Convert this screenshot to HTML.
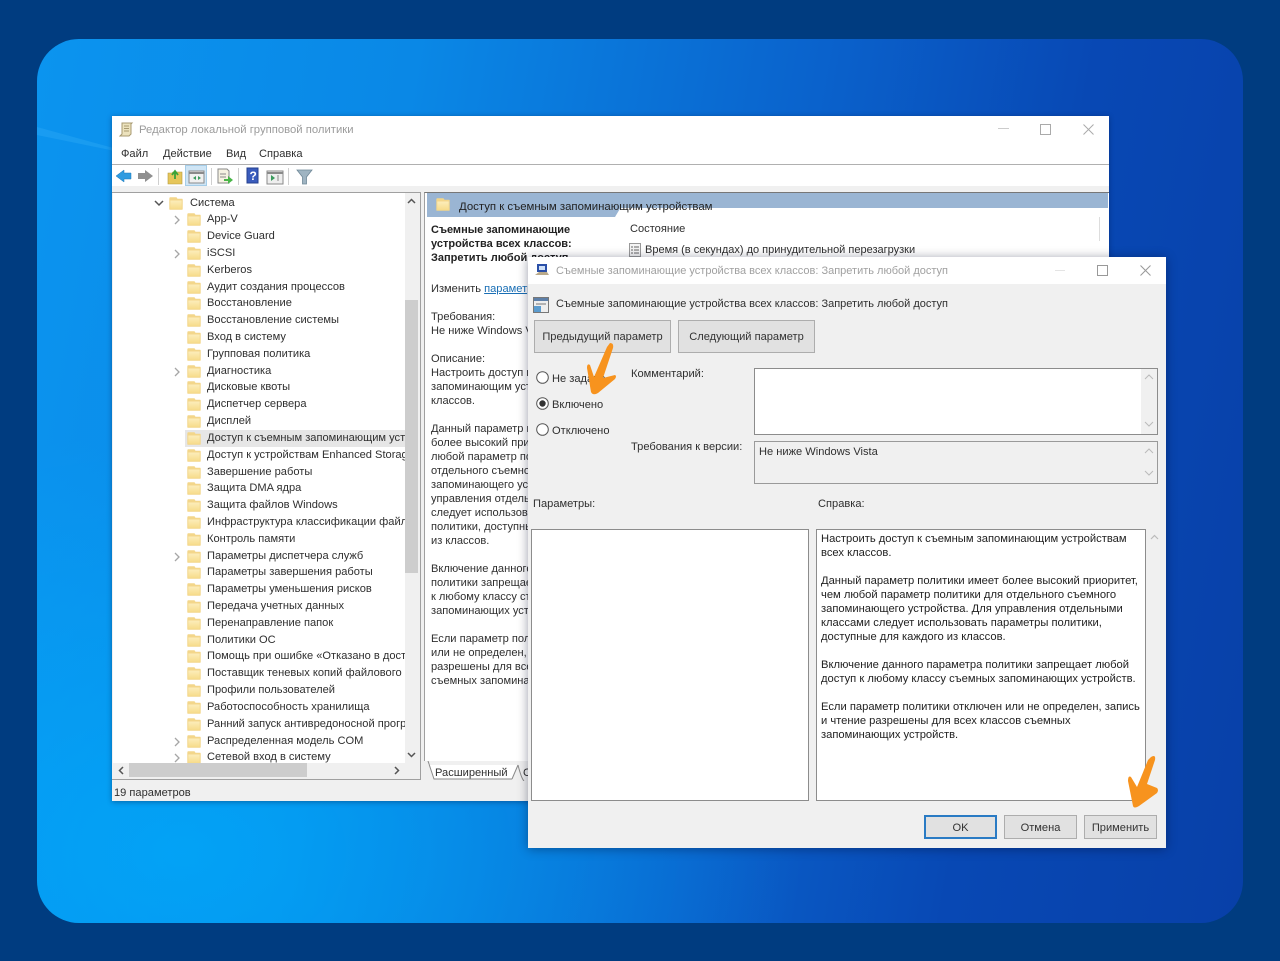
<!DOCTYPE html>
<html lang="ru"><head><meta charset="utf-8"><title>Редактор</title>
<style>
html,body{margin:0;padding:0}
body{width:1280px;height:961px;position:relative;overflow:hidden;background:#003c80;font-family:"Liberation Sans",sans-serif;font-size:11.1px;color:#2f2f2f}
.a{position:absolute;white-space:nowrap;line-height:14px}
.t{margin-top:1px}
.bg{position:absolute;left:37px;top:39px;width:1206px;height:884px;border-radius:42px;overflow:hidden;background:radial-gradient(620px 420px at 12% 92%,rgba(0,170,250,.75),rgba(0,170,250,0) 100%),linear-gradient(100deg,#0b94ef 0%,#0a88e6 28%,#0a62cc 58%,#0848b4 78%,#0840a8 100%)}
.win{position:absolute;background:#fff}
.tree{position:absolute;left:113px;top:193px;width:292px;height:570px;overflow:hidden;background:#fff;padding-top:1.500px;box-sizing:border-box}
.r{position:relative;height:16.8125px;line-height:16.8px;padding-left:94px;white-space:nowrap}
.r svg.f{position:absolute;left:74px;top:2px}
.r svg.c{position:absolute;left:60px;top:4px}
.sel{background:#e6e6e6}
.btn{position:absolute;background:#e1e1e1;border:1px solid #adadad;box-sizing:border-box;text-align:center;color:#333}
.tb{position:absolute;background:#fff;border:1px solid #8c8c8c;box-sizing:border-box}
</style></head><body>
<svg width="0" height="0" style="position:absolute"><defs>
<linearGradient id="fg" x1="0" y1="0" x2="0" y2="1"><stop offset="0" stop-color="#fcedbb"/><stop offset="1" stop-color="#f7dc8c"/></linearGradient>
<symbol id="fo" viewBox="0 0 14 13"><path d="M.3 2.500V12c0 .5.3.8.8.8h11.800c.5 0 .8-.3.8-.8V2.500c0-.5-.3-.8-.8-.8H8.500L7.500.3H1.100C.6.300.3.800.3 2.500z" fill="#f3d68a"/><path d="M1.300 3.500h11.400v8.300H1.300z" fill="url(#fg)"/></symbol>
<symbol id="ch" viewBox="0 0 8 10"><path d="M2 1l4 4-4 4" fill="none" stroke="#a6a6a6" stroke-width="1.300"/></symbol>
</defs></svg>

<div class="bg">
<svg width="1206" height="884" style="position:absolute;left:0;top:0"><path d="M0 88L80 110 78 112 0 96z" fill="#3db2f7" opacity=".3"/></svg>
</div>

<!-- main window -->
<div class="win" style="left:112px;top:116px;width:997px;height:685px;background:#f0f0f0;box-shadow:0 1px 5px rgba(0,20,60,.4)"></div>
<div class="a" style="left:112px;top:116px;width:997px;height:49px;background:#fff;border-bottom:1px solid #b0b0b0;box-sizing:border-box"></div>
<svg class="a" style="left:119px;top:122px" width="15" height="15" viewBox="0 0 15 15"><path d="M3 1h10l-1 1v10l-2 2H1l2-2z" fill="#ece2bd" stroke="#a89a70"/><path d="M5 4h5M5 6.500h5M5 9h5" stroke="#a89a70"/></svg>
<div class="a t" style="left:139px;top:122px;color:#9b9b9b;font-size:11.300px">Редактор локальной групповой политики</div>
<div class="a" style="left:121px;top:147px">Файл</div>
<div class="a" style="left:163px;top:147px">Действие</div>
<div class="a" style="left:226px;top:147px">Вид</div>
<div class="a" style="left:259px;top:147px">Справка</div>
<div class="a" style="left:998px;top:128px;width:11px;height:1px;background:#ccc"></div>
<div class="a" style="left:1040px;top:124px;width:9px;height:9px;border:1px solid #aaa"></div>
<svg class="a" style="left:1083px;top:124px" width="11" height="11"><path d="M.5.500l10 10M10.500.500l-10 10" stroke="#aaa"/></svg>

<!-- toolbar -->
<div class="a" style="left:112px;top:165px;width:997px;height:21px;background:#fff"></div>
<svg class="a" style="left:112px;top:165px" width="210" height="22" viewBox="0 0 210 22">
<path d="M4 11l8-6v3h7v6h-7v3z" fill="#2f9be0" stroke="#1d78b8" stroke-width=".5"/>
<path d="M41 11l-8-6v3h-7v6h7v3z" fill="#8f8f8f"/>
<path d="M46.500 3v17" stroke="#cfcfcf"/>
<path d="M56 8h4l1-1h9v12H56z" fill="#e6c65a" stroke="#b59a3c" stroke-width=".6"/><path d="M63 14V7m-3 3l3-4 3 4" fill="none" stroke="#3aa33a" stroke-width="1.800"/>
<rect x="73.500" y=".5" width="21" height="20" fill="#cfe5f5" stroke="#a5cde8"/>
<rect x="77" y="6" width="15" height="12" fill="#f0f0f0" stroke="#8a8a8a"/><path d="M77 8h15" stroke="#8a8a8a" stroke-width="2"/><path d="M81 13l3-2v4zM89 13l-3-2v4z" fill="#3a9a5c"/>
<path d="M99.500 3v17" stroke="#cfcfcf"/>
<path d="M106 4h9l2 2v12h-11z" fill="#f6f2e2" stroke="#8a8a8a"/><path d="M108 9h6M108 12h6" stroke="#8a8a8a"/><path d="M112 14h4v-3l5 4-5 4v-3h-4z" fill="#49b548"/>
<path d="M126.500 3v17" stroke="#cfcfcf"/>
<rect x="135" y="3" width="11" height="15" fill="#3a5cbc" stroke="#24408f"/><text x="137.500" y="15" font-size="12" font-weight="bold" fill="#fff" font-family="Liberation Sans,sans-serif">?</text>
<rect x="155" y="6" width="16" height="13" fill="#eee" stroke="#8a8a8a"/><path d="M155 8h16" stroke="#8a8a8a" stroke-width="2"/><path d="M159 10l4 3-4 3z" fill="#3a9a5c"/><path d="M166 10v6" stroke="#8a8a8a"/>
<path d="M176.500 3v17" stroke="#cfcfcf"/>
<path d="M185 5h15l-5.500 7v7h-4v-7z" fill="#9fb4c2" stroke="#6f8898" stroke-width=".8"/>
</svg>

<!-- left tree -->
<div class="a" style="left:112px;top:192px;width:309px;height:588px;background:#f0f0f0;border:1px solid #a0a0a0;border-width:1px 1px 1px 0;box-sizing:border-box"></div>
<div class="tree">
<div class="r" style="padding-left:77px"><svg class="c" style="left:41px" width="10" height="8" viewBox="0 0 10 8"><path d="M1 2l4 4 4-4" fill="none" stroke="#555" stroke-width="1.500"/></svg><svg class="f" style="left:56px" width="14" height="13"><use href="#fo"/></svg>Система</div>
<div class="r"><svg class="c" width="8" height="10"><use href="#ch"/></svg><svg class="f" width="14" height="13"><use href="#fo"/></svg>App-V</div>
<div class="r"><svg class="f" width="14" height="13"><use href="#fo"/></svg>Device Guard</div>
<div class="r"><svg class="c" width="8" height="10"><use href="#ch"/></svg><svg class="f" width="14" height="13"><use href="#fo"/></svg>iSCSI</div>
<div class="r"><svg class="f" width="14" height="13"><use href="#fo"/></svg>Kerberos</div>
<div class="r"><svg class="f" width="14" height="13"><use href="#fo"/></svg>Аудит создания процессов</div>
<div class="r"><svg class="f" width="14" height="13"><use href="#fo"/></svg>Восстановление</div>
<div class="r"><svg class="f" width="14" height="13"><use href="#fo"/></svg>Восстановление системы</div>
<div class="r"><svg class="f" width="14" height="13"><use href="#fo"/></svg>Вход в систему</div>
<div class="r"><svg class="f" width="14" height="13"><use href="#fo"/></svg>Групповая политика</div>
<div class="r"><svg class="c" width="8" height="10"><use href="#ch"/></svg><svg class="f" width="14" height="13"><use href="#fo"/></svg>Диагностика</div>
<div class="r"><svg class="f" width="14" height="13"><use href="#fo"/></svg>Дисковые квоты</div>
<div class="r"><svg class="f" width="14" height="13"><use href="#fo"/></svg>Диспетчер сервера</div>
<div class="r"><svg class="f" width="14" height="13"><use href="#fo"/></svg>Дисплей</div>
<div class="r sel" style="margin-left:72px;padding-left:22px"><svg class="f" style="left:2px" width="14" height="13"><use href="#fo"/></svg>Доступ к съемным запоминающим устройствам</div>
<div class="r"><svg class="f" width="14" height="13"><use href="#fo"/></svg>Доступ к устройствам Enhanced Storage</div>
<div class="r"><svg class="f" width="14" height="13"><use href="#fo"/></svg>Завершение работы</div>
<div class="r"><svg class="f" width="14" height="13"><use href="#fo"/></svg>Защита DMA ядра</div>
<div class="r"><svg class="f" width="14" height="13"><use href="#fo"/></svg>Защита файлов Windows</div>
<div class="r"><svg class="f" width="14" height="13"><use href="#fo"/></svg>Инфраструктура классификации файлов</div>
<div class="r"><svg class="f" width="14" height="13"><use href="#fo"/></svg>Контроль памяти</div>
<div class="r"><svg class="c" width="8" height="10"><use href="#ch"/></svg><svg class="f" width="14" height="13"><use href="#fo"/></svg>Параметры диспетчера служб</div>
<div class="r"><svg class="f" width="14" height="13"><use href="#fo"/></svg>Параметры завершения работы</div>
<div class="r"><svg class="f" width="14" height="13"><use href="#fo"/></svg>Параметры уменьшения рисков</div>
<div class="r"><svg class="f" width="14" height="13"><use href="#fo"/></svg>Передача учетных данных</div>
<div class="r"><svg class="f" width="14" height="13"><use href="#fo"/></svg>Перенаправление папок</div>
<div class="r"><svg class="f" width="14" height="13"><use href="#fo"/></svg>Политики ОС</div>
<div class="r"><svg class="f" width="14" height="13"><use href="#fo"/></svg>Помощь при ошибке «Отказано в доступе»</div>
<div class="r"><svg class="f" width="14" height="13"><use href="#fo"/></svg>Поставщик теневых копий файлового ресурса</div>
<div class="r"><svg class="f" width="14" height="13"><use href="#fo"/></svg>Профили пользователей</div>
<div class="r"><svg class="f" width="14" height="13"><use href="#fo"/></svg>Работоспособность хранилища</div>
<div class="r"><svg class="f" width="14" height="13"><use href="#fo"/></svg>Ранний запуск антивредоносной программы</div>
<div class="r"><svg class="c" width="8" height="10"><use href="#ch"/></svg><svg class="f" width="14" height="13"><use href="#fo"/></svg>Распределенная модель COM</div>
<div class="r"><svg class="c" width="8" height="10"><use href="#ch"/></svg><svg class="f" width="14" height="13"><use href="#fo"/></svg>Сетевой вход в систему</div>
</div>
<!-- scrollbars -->
<div class="a" style="left:405px;top:193px;width:15px;height:570px;background:#f0f0f0"></div>
<div class="a" style="left:405px;top:300px;width:13px;height:273px;background:#cdcdcd"></div>
<svg class="a" style="left:407px;top:198px" width="9" height="7"><path d="M1 5l3.500-3.500L8 5" fill="none" stroke="#555" stroke-width="1.500"/></svg>
<svg class="a" style="left:407px;top:751px" width="9" height="7"><path d="M1 2l3.500 3.500L8 2" fill="none" stroke="#555" stroke-width="1.500"/></svg>
<div class="a" style="left:129px;top:763px;width:178px;height:14px;background:#cdcdcd"></div>
<svg class="a" style="left:118px;top:766px" width="7" height="9"><path d="M5 1L1.500 4.500 5 8" fill="none" stroke="#555" stroke-width="1.500"/></svg>
<svg class="a" style="left:393px;top:766px" width="7" height="9"><path d="M2 1l3.500 3.500L2 8" fill="none" stroke="#555" stroke-width="1.500"/></svg>
<div class="a t" style="left:114px;top:785px">19 параметров</div>

<!-- right pane -->
<div class="a" style="left:424px;top:192px;width:685px;height:569px;background:#fff;border:1px solid #a0a0a0;border-top-color:#777;border-bottom:0;border-right:0;box-sizing:border-box"></div>
<div class="a" style="left:427px;top:193px;width:681px;height:15px;background:#9ab5d3"></div>
<svg class="a" style="left:427px;top:193px" width="200" height="25"><path d="M0 0h200v14h-6l-6 10H0z" fill="#9ab5d3"/></svg>
<svg class="a" style="left:436px;top:198px" width="14" height="13"><use href="#fo"/></svg>
<div class="a t" style="left:459px;top:199px;color:#222;font-size:11.400px">Доступ к съемным запоминающим устройствам</div>
<div class="a t" style="left:431px;top:222px;font-weight:bold;font-size:11px;color:#222">Съемные запоминающие<br>устройства всех классов:<br>Запретить любой доступ</div>
<div class="a t" style="left:431px;top:281px">Изменить <span style="color:#1a6fb5;text-decoration:underline">параметр политики</span></div>
<div class="a t" style="left:431px;top:309px">Требования:<br>Не ниже Windows Vista</div>
<div class="a t" style="left:431px;top:351px">Описание:<br>Настроить доступ к съемным<br>запоминающим устройствам<br>классов.</div>
<div class="a t" style="left:431px;top:421px">Данный параметр политики<br>более высокий приоритет, чем<br>любой параметр политики для<br>отдельного съемного<br>запоминающего устройства. Для<br>управления отдельными классами<br>следует использовать параметры<br>политики, доступные для каждого<br>из классов.</div>
<div class="a t" style="left:431px;top:561px">Включение данного параметра<br>политики запрещает любой доступ<br>к любому классу съемных<br>запоминающих устройств.</div>
<div class="a t" style="left:431px;top:631px">Если параметр политики отключен<br>или не определен, запись и чтение<br>разрешены для всех классов<br>съемных запоминающих устройств.</div>
<div class="a t" style="left:630px;top:221px">Состояние</div>
<svg class="a" style="left:629px;top:243px" width="12" height="14"><rect x=".5" y=".5" width="11" height="13" fill="#f4f4f4" stroke="#999"/><path d="M2 4h2M2 7h2M2 10h2M5 4h5M5 7h5M5 10h5" stroke="#666"/></svg>
<div class="a t" style="left:645px;top:242px;font-size:11px">Время (в секундах) до принудительной перезагрузки</div>
<div class="a" style="left:1099px;top:217px;width:1px;height:24px;background:#ddd"></div>
<svg class="a" style="left:426px;top:761px" width="102" height="20"><path d="M2 0l6 18h78l6-14h-90z" fill="#fff"/><path d="M2 0l6 18h78M86 18l6-14" fill="none" stroke="#8a8a8a"/><path d="M92 4c2 8 4 14 6 16" fill="none" stroke="#8a8a8a"/></svg>
<div class="a t" style="left:435px;top:765px">Расширенный</div>
<div class="a t" style="left:523px;top:765px">С</div>

<!-- dialog -->
<div class="win" style="left:528px;top:257px;width:638px;height:591px;background:#f0f0f0;box-shadow:0 1px 10px rgba(0,10,40,.4)"></div>
<div class="a" style="left:528px;top:257px;width:638px;height:27px;background:#fff"></div>
<svg class="a" style="left:535px;top:263px" width="15" height="14"><rect x="2" y="1" width="10" height="8" fill="#2a4fa8"/><path d="M0 12l4-3h8l2 3z" fill="#b9a98a"/><rect x="4" y="3" width="6" height="4" fill="#cfe0f7"/></svg>
<div class="a t" style="left:556px;top:263px;color:#a0a0a0;font-size:11px">Съемные запоминающие устройства всех классов: Запретить любой доступ</div>
<div class="a" style="left:1055px;top:270px;width:10px;height:1px;background:#e4e4e4"></div>
<div class="a" style="left:1097px;top:265px;width:9px;height:9px;border:1px solid #999"></div>
<svg class="a" style="left:1140px;top:265px" width="11" height="11"><path d="M.5.500l10 10M10.500.500l-10 10" stroke="#999"/></svg>
<svg class="a" style="left:533px;top:297px" width="16" height="16"><rect x=".5" y=".5" width="15" height="15" fill="#eee" stroke="#777"/><rect x="1" y="1" width="14" height="3" fill="#5d7fa8"/><rect x="1" y="9" width="7" height="6" fill="#5b9ccf"/><path d="M3 7h10" stroke="#777"/></svg>
<div class="a t" style="left:556px;top:296px;font-size:11px">Съемные запоминающие устройства всех классов: Запретить любой доступ</div>
<div class="btn" style="left:534px;top:320px;width:137px;height:33px;line-height:33px">Предыдущий параметр</div>
<div class="btn" style="left:678px;top:320px;width:137px;height:33px;line-height:33px">Следующий параметр</div>

<svg class="a" style="left:536px;top:371px" width="13" height="65"><circle cx="6.500" cy="6.500" r="5.800" fill="#fff" stroke="#555"/><circle cx="6.500" cy="32.500" r="5.800" fill="#fff" stroke="#555"/><circle cx="6.500" cy="32.500" r="3.200" fill="#333"/><circle cx="6.500" cy="58.500" r="5.800" fill="#fff" stroke="#555"/></svg>
<div class="a t" style="left:552px;top:371px">Не задано</div>
<div class="a t" style="left:552px;top:397px">Включено</div>
<div class="a t" style="left:552px;top:423px">Отключено</div>
<div class="a t" style="left:631px;top:366px">Комментарий:</div>
<div class="a t" style="left:631px;top:439px">Требования к версии:</div>

<div class="tb" style="left:754px;top:368px;width:404px;height:67px"></div>
<div class="a" style="left:1141px;top:369px;width:16px;height:65px;background:#f0f0f0"></div>
<div class="tb" style="left:754px;top:441px;width:404px;height:43px;background:#f0f0f0;border-color:#9a9a9a"></div>
<div class="a t" style="left:759px;top:444px">Не ниже Windows Vista</div>
<svg class="a" style="left:1144px;top:370px" width="10" height="110"><path d="M1 9l4-4 4 4M1 52l4 4 4-4M1 83l4-4 4 4M1 101l4 4 4-4" fill="none" stroke="#bbb"/></svg>

<div class="a t" style="left:533px;top:496px">Параметры:</div>
<div class="a t" style="left:818px;top:496px">Справка:</div>
<div class="tb" style="left:531px;top:529px;width:278px;height:272px"></div>
<div class="tb" style="left:816px;top:529px;width:330px;height:272px"></div>
<div class="a t" style="left:821px;top:531px;color:#222;font-size:11.200px">Настроить доступ к съемным запоминающим устройствам<br>всех классов.<br><br>Данный параметр политики имеет более высокий приоритет,<br>чем любой параметр политики для отдельного съемного<br>запоминающего устройства. Для управления отдельными<br>классами следует использовать параметры политики,<br>доступные для каждого из классов.<br><br>Включение данного параметра политики запрещает любой<br>доступ к любому классу съемных запоминающих устройств.<br><br>Если параметр политики отключен или не определен, запись<br>и чтение разрешены для всех классов съемных<br>запоминающих устройств.</div>
<svg class="a" style="left:1150px;top:534px" width="9" height="7"><path d="M1 5l3.500-3.500L8 5" fill="none" stroke="#bbb" stroke-width="1.200"/></svg>

<div class="btn" style="left:924px;top:815px;width:73px;height:24px;line-height:22px;border:2px solid #2a7bc4">OK</div>
<div class="btn" style="left:1004px;top:815px;width:73px;height:24px;line-height:24px">Отмена</div>
<div class="btn" style="left:1084px;top:815px;width:73px;height:24px;line-height:24px">Применить</div>

<!-- arrows -->
<svg class="a" style="left:0;top:0" width="1280" height="961"><g fill="#f7931e"><path d="M610 343Q614 343 613 348L603 378 615 375Q617 376 615 379L598 393Q593 396 591 392L587 368Q587 363 590 365L594 377 607 347Z"/><path d="M1151 757Q1156 754 1155 760L1147 784 1157 788Q1159 790 1157 793L1139 806Q1134 809 1133 806L1128 781Q1128 775 1131 777L1137 787 1148 760Z"/></g></svg>
</body></html>
